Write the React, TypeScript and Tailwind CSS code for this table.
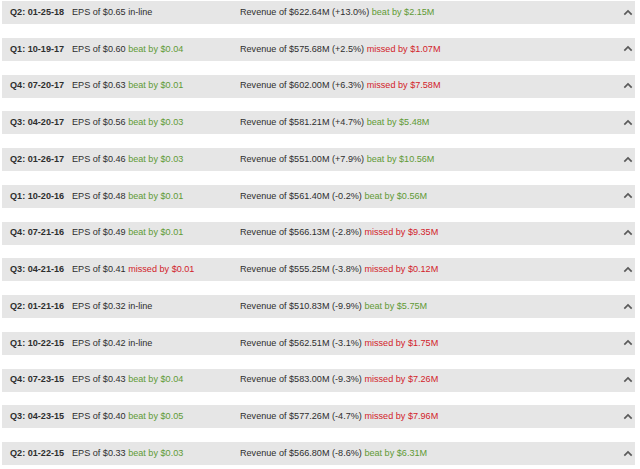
const ROWS = [
  { q: "Q2: 01-25-18", eps: "$0.65", epsRes: "in-line", epsAmt: "", rev: "$622.64M", pct: "+13.0%", revRes: "beat", revAmt: "$2.15M" },
  { q: "Q1: 10-19-17", eps: "$0.60", epsRes: "beat", epsAmt: "$0.04", rev: "$575.68M", pct: "+2.5%", revRes: "missed", revAmt: "$1.07M" },
  { q: "Q4: 07-20-17", eps: "$0.63", epsRes: "beat", epsAmt: "$0.01", rev: "$602.00M", pct: "+6.3%", revRes: "missed", revAmt: "$7.58M" },
  { q: "Q3: 04-20-17", eps: "$0.56", epsRes: "beat", epsAmt: "$0.03", rev: "$581.21M", pct: "+4.7%", revRes: "beat", revAmt: "$5.48M" },
  { q: "Q2: 01-26-17", eps: "$0.46", epsRes: "beat", epsAmt: "$0.03", rev: "$551.00M", pct: "+7.9%", revRes: "beat", revAmt: "$10.56M" },
  { q: "Q1: 10-20-16", eps: "$0.48", epsRes: "beat", epsAmt: "$0.01", rev: "$561.40M", pct: "-0.2%", revRes: "beat", revAmt: "$0.56M" },
  { q: "Q4: 07-21-16", eps: "$0.49", epsRes: "beat", epsAmt: "$0.01", rev: "$566.13M", pct: "-2.8%", revRes: "missed", revAmt: "$9.35M" },
  { q: "Q3: 04-21-16", eps: "$0.41", epsRes: "missed", epsAmt: "$0.01", rev: "$555.25M", pct: "-3.8%", revRes: "missed", revAmt: "$0.12M" },
  { q: "Q2: 01-21-16", eps: "$0.32", epsRes: "in-line", epsAmt: "", rev: "$510.83M", pct: "-9.9%", revRes: "beat", revAmt: "$5.75M" },
  { q: "Q1: 10-22-15", eps: "$0.42", epsRes: "in-line", epsAmt: "", rev: "$562.51M", pct: "-3.1%", revRes: "missed", revAmt: "$1.75M" },
  { q: "Q4: 07-23-15", eps: "$0.43", epsRes: "beat", epsAmt: "$0.04", rev: "$583.00M", pct: "-9.3%", revRes: "missed", revAmt: "$7.26M" },
  { q: "Q3: 04-23-15", eps: "$0.40", epsRes: "beat", epsAmt: "$0.05", rev: "$577.26M", pct: "-4.7%", revRes: "missed", revAmt: "$7.96M" },
  { q: "Q2: 01-22-15", eps: "$0.33", epsRes: "beat", epsAmt: "$0.03", rev: "$566.80M", pct: "-8.6%", revRes: "beat", revAmt: "$6.31M" },
];

function Result({ res, amt }: { res: string; amt: string }) {
  if (res === "in-line") return <span>in-line</span>;
  const color = res === "beat" ? "text-[#5f9a35]" : "text-[#d2232a]";
  return (
    <span className={color}>
      {res} by {amt}
    </span>
  );
}

function Chevron() {
  return (
    <svg width="10" height="7" viewBox="0 0 10 7" className="text-[#5a5a5a]">
      <path d="M1.3 5.6 L5 1.9 L8.7 5.6" fill="none" stroke="currentColor" strokeWidth="1.7" />
    </svg>
  );
}

export default function App() {
  return (
    <div className="w-[640px] h-[469px] bg-white overflow-hidden font-['Liberation_Sans',Arial,sans-serif] text-[9.1px] text-[#2e2e2e] whitespace-nowrap">
      <div className="flex flex-col gap-[13.75px] pt-[1px] pl-[2px] w-[635px]">
        {ROWS.map((r) => (
          <div key={r.q} className="h-[23px] bg-[#e6e6e6] flex items-center pl-[8px] pr-[1px] leading-none">
            <span className="w-[62px] font-bold">{r.q}</span>
            <span className="w-[168px]">
              EPS of {r.eps} <Result res={r.epsRes} amt={r.epsAmt} />
            </span>
            <span className="flex-1">
              Revenue of {r.rev} ({r.pct}) <Result res={r.revRes} amt={r.revAmt} />
            </span>
            <span className="w-[12px] flex justify-center mb-[1px]">
              <Chevron />
            </span>
          </div>
        ))}
      </div>
    </div>
  );
}
